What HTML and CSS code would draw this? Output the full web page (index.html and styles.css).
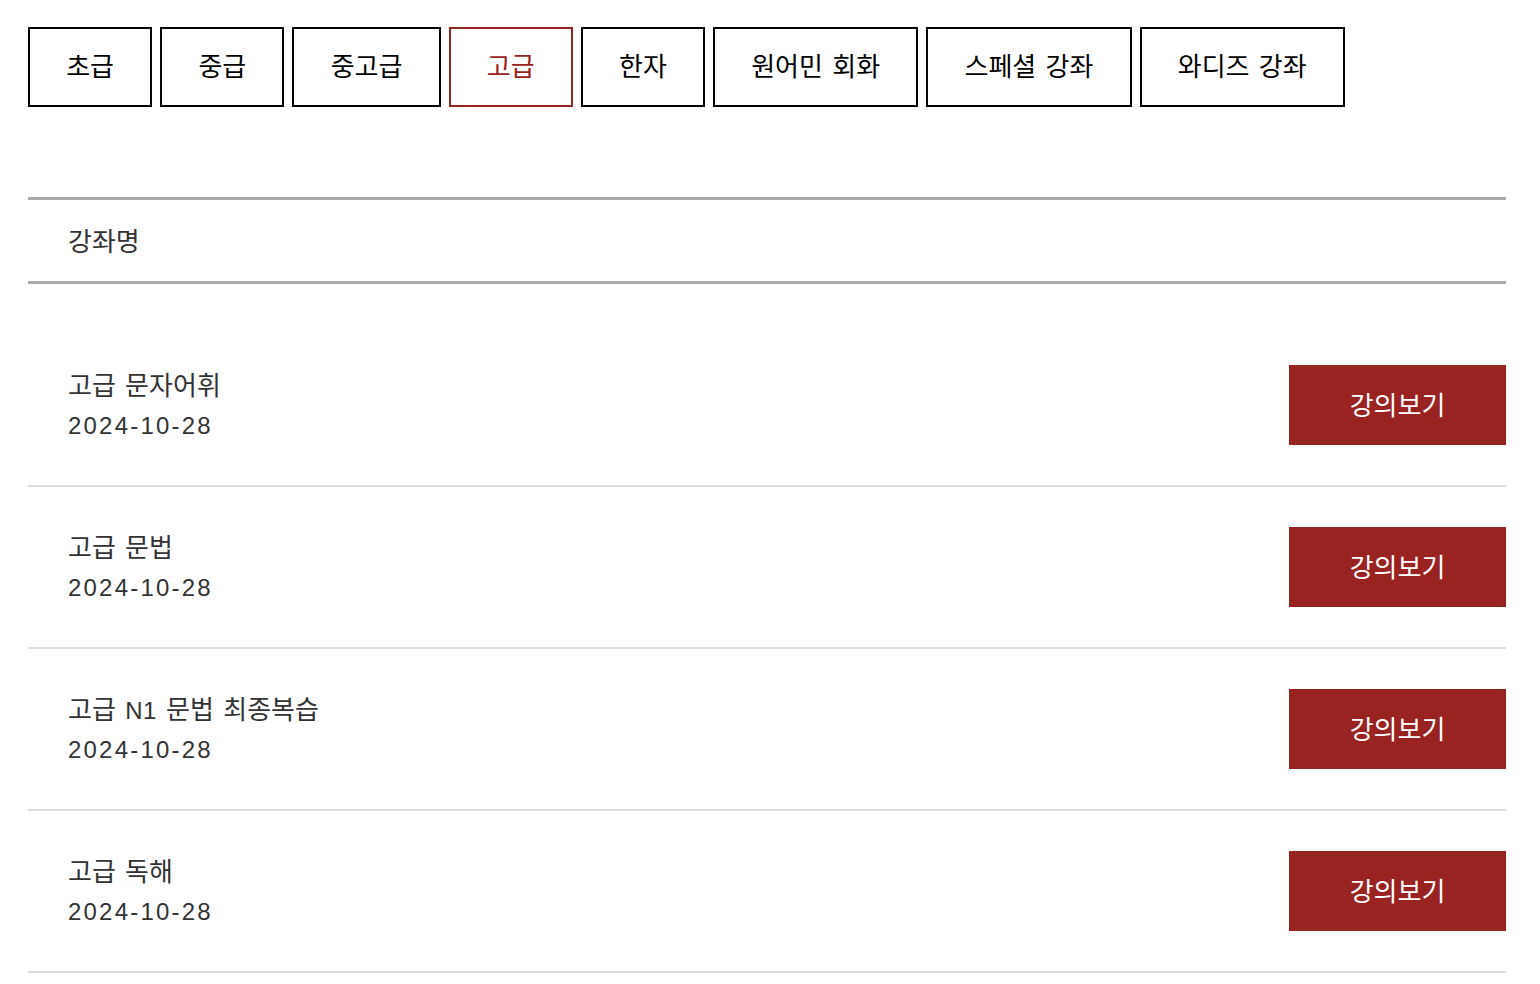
FILE: index.html
```html
<!DOCTYPE html>
<html lang="ko">
<head>
<meta charset="utf-8">
<title>강좌 목록</title>
<link rel="stylesheet" href="styles.css">
</head>
<body>
<div class="page">
  <nav class="tabs">
    <a class="tab">초급</a>
    <a class="tab">중급</a>
    <a class="tab">중고급</a>
    <a class="tab active">고급</a>
    <a class="tab">한자</a>
    <a class="tab">원어민 회화</a>
    <a class="tab">스페셜 강좌</a>
    <a class="tab">와디즈 강좌</a>
  </nav>

  <section class="board">
    <div class="board-head">강좌명</div>
    <ul class="list">
      <li class="row">
        <div class="info">
          <div class="title">고급 문자어휘</div>
          <div class="date">2024-10-28</div>
        </div>
        <a class="btn">강의보기</a>
      </li>
      <li class="row">
        <div class="info">
          <div class="title">고급 문법</div>
          <div class="date">2024-10-28</div>
        </div>
        <a class="btn">강의보기</a>
      </li>
      <li class="row">
        <div class="info">
          <div class="title">고급 <span class="latin">N1</span> 문법 최종복습</div>
          <div class="date">2024-10-28</div>
        </div>
        <a class="btn">강의보기</a>
      </li>
      <li class="row">
        <div class="info">
          <div class="title">고급 독해</div>
          <div class="date">2024-10-28</div>
        </div>
        <a class="btn">강의보기</a>
      </li>
    </ul>
  </section>
</div>
</body>
</html>
```
FILE: styles.css
```css
* { box-sizing: border-box; }
html, body { margin: 0; padding: 0; background: #fff; }
body {
  font-family: "Liberation Sans", "Noto Sans CJK KR", sans-serif;
  color: #333;
}
.page {
  padding: 27px 34px 0 28px;
}
.tabs {
  display: flex;
  gap: 8px;
}
.tab {
  display: flex;
  align-items: center;
  justify-content: center;
  height: 80px;
  padding: 0 36.2px 5px 36.2px;
  border: 2px solid #000;
  color: #000;
  font-family: "Noto Sans CJK KR", sans-serif;
  font-size: 26px;
  word-spacing: 2px;
  text-decoration: none;
  white-space: nowrap;
}
.tab.active {
  border-color: #992320;
  color: #992320;
}
.board {
  margin-top: 90px;
}
.board-head {
  border-top: 3px solid #aaa;
  border-bottom: 3px solid #aaa;
  height: 87px;
  display: flex;
  align-items: center;
  padding: 0 0 3px 40px;
  font-family: "Noto Sans CJK KR", sans-serif;
  font-size: 26px;
  color: #333;
}
.list {
  list-style: none;
  margin: 0;
  padding: 41px 0 0;
}
.row {
  display: flex;
  align-items: center;
  justify-content: space-between;
  padding: 40px 0 40px 40px;
  border-bottom: 2px solid #ddd;
}
.info {
  line-height: 40px;
  color: #333;
}
.title {
  font-family: "Noto Sans CJK KR", sans-serif;
  font-size: 26px;
  word-spacing: 2px;
  position: relative;
  top: -1px;
}
.title .latin {
  font-family: "Liberation Sans", sans-serif;
  font-size: 24px;
  line-height: 1;
  word-spacing: 0;
  letter-spacing: 0.5px;
}
.date {
  font-size: 24px;
  letter-spacing: 2.2px;
  position: relative;
  top: 1px;
}
.btn {
  display: flex;
  align-items: center;
  justify-content: center;
  width: 217px;
  height: 80px;
  padding-bottom: 4px;
  background: #992320;
  color: #fff;
  font-family: "Noto Sans CJK KR", sans-serif;
  font-size: 26px;
}
```
